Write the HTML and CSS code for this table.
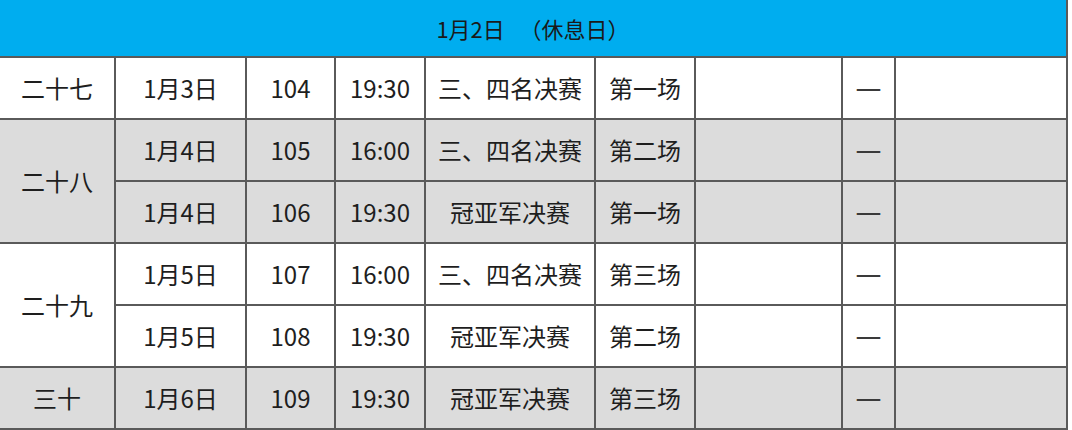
FILE: index.html
```html
<!DOCTYPE html>
<html lang="zh">
<head>
<meta charset="utf-8">
<link rel="stylesheet" href="styles.css">
</head>
<body>
<table class="schedule">
  <colgroup>
    <col class="c1"><col class="c2"><col class="c3"><col class="c4"><col class="c5"><col class="c6"><col class="c7"><col class="c8"><col class="c9">
  </colgroup>
  <tr class="head"><td colspan="9">1月2日&nbsp;&nbsp;&nbsp;（休息日）</td></tr>
  <tr class="row">
    <td>二十七</td><td>1月3日</td><td>104</td><td>19:30</td><td>三、四名决赛</td><td>第一场</td><td></td><td class="dash">—</td><td></td>
  </tr>
  <tr class="row gray">
    <td rowspan="2">二十八</td><td>1月4日</td><td>105</td><td>16:00</td><td>三、四名决赛</td><td>第二场</td><td></td><td class="dash">—</td><td></td>
  </tr>
  <tr class="row gray">
    <td>1月4日</td><td>106</td><td>19:30</td><td>冠亚军决赛</td><td>第一场</td><td></td><td class="dash">—</td><td></td>
  </tr>
  <tr class="row">
    <td rowspan="2">二十九</td><td>1月5日</td><td>107</td><td>16:00</td><td>三、四名决赛</td><td>第三场</td><td></td><td class="dash">—</td><td></td>
  </tr>
  <tr class="row">
    <td>1月5日</td><td>108</td><td>19:30</td><td>冠亚军决赛</td><td>第二场</td><td></td><td class="dash">—</td><td></td>
  </tr>
  <tr class="row gray">
    <td>三十</td><td>1月6日</td><td>109</td><td>19:30</td><td>冠亚军决赛</td><td>第三场</td><td></td><td class="dash">—</td><td></td>
  </tr>
</table>
</body>
</html>
```
FILE: styles.css
```css
html, body {
  margin: 0;
  padding: 0;
  background: #ffffff;
}
body {
  font-family: "Noto Sans CJK SC", "Noto Sans", sans-serif;
  color: #1e1e1e;
}
.schedule {
  width: 1067px;
  table-layout: fixed;
  border-collapse: collapse;
  border-spacing: 0;
}
.c1 { width: 115px; }
.c2 { width: 131px; }
.c3 { width: 89px; }
.c4 { width: 90px; }
.c5 { width: 170px; }
.c6 { width: 100px; }
.c7 { width: 147px; }
.c8 { width: 53px; }
.c9 { width: 172px; }
.schedule td {
  border: 2px solid #5a5a5a;
  padding: 0;
  text-align: center;
  vertical-align: middle;
  font-size: 24px;
  line-height: 1;
  white-space: nowrap;
}
.schedule tr td:first-child {
  border-left: none;
}
.head td {
  height: 56px;
  background: #00adef;
  border-top: none;
  font-size: 22px;
  color: #1a1a1a;
}
.row td {
  height: 60px;
}
.gray td {
  background: #dcdcdc;
}
.schedule td.dash {
  font-family: "DejaVu Sans", sans-serif;
  font-size: 26px;
  color: #3a3a3a;
}
```
